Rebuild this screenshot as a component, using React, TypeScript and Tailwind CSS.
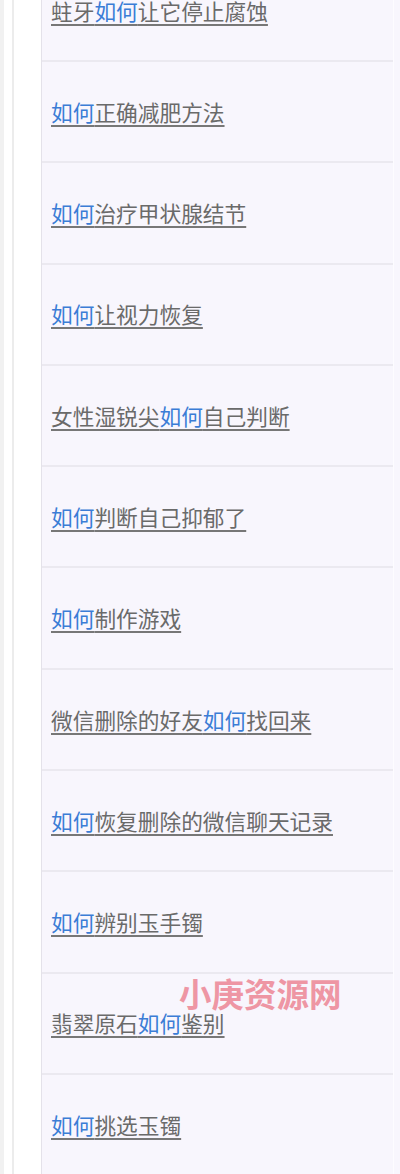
import React from "react";

const items: [string, string, string][] = [
  ["蛀牙", "如何", "让它停止腐蚀"],
  ["", "如何", "正确减肥方法"],
  ["", "如何", "治疗甲状腺结节"],
  ["", "如何", "让视力恢复"],
  ["女性湿锐尖", "如何", "自己判断"],
  ["", "如何", "判断自己抑郁了"],
  ["", "如何", "制作游戏"],
  ["微信删除的好友", "如何", "找回来"],
  ["", "如何", "恢复删除的微信聊天记录"],
  ["", "如何", "辨别玉手镯"],
  ["翡翠原石", "如何", "鉴别"],
  ["", "如何", "挑选玉镯"],
];

export default function App() {
  return (
    <div
      className="relative w-[400px] h-[1174px] overflow-hidden bg-white"
      style={{ fontFamily: '"Noto Sans CJK SC", "Noto Sans", sans-serif' }}
    >
      <div className="flex h-full">
        <div className="w-[4px] bg-[#f1f1f1]" />
        <div className="w-[8px] bg-white" />
        <div className="w-[2px] bg-[#ececec]" />
        <div className="w-[27px] bg-white" />
        <div className="w-[1px] bg-[#e4e2ea]" />
        <div className="flex-1 bg-[#f8f6fd] border-r border-[#fdfcff] mr-[6px]">
          <div className="mt-[-39.3px] flex flex-col">
            {items.map((it, i) => (
              <div
                key={i}
                className="h-[101.3px] flex items-center pl-[9px] border-b-2 border-[#ebe9f0]"
              >
                <a className="text-[21.7px] leading-none text-[#6a6a6a] underline underline-offset-[4px] decoration-[1.5px] decoration-[#777777] whitespace-nowrap">
                  {it[0]}
                  <span className="text-[#3b7dd6] decoration-[#3b6fb8]">{it[1]}</span>
                  {it[2]}
                </a>
              </div>
            ))}
          </div>
        </div>
        <div className="w-[6px] bg-[#f8f6fd] -ml-[6px]" />
      </div>
      <div className="absolute left-[179px] top-[977px] text-[32.5px] font-bold leading-none text-[#ec7f8f] opacity-80">
        小庚资源网
      </div>
    </div>
  );
}
